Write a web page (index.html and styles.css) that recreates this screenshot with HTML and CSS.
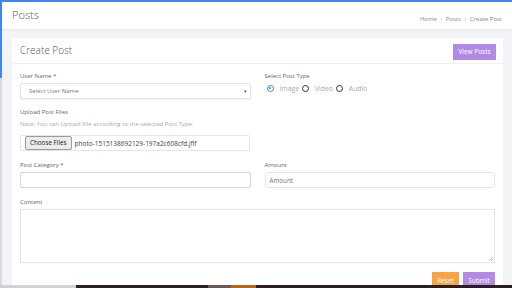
FILE: index.html
```html
<!DOCTYPE html>
<html lang="en">
<head>
  <meta charset="UTF-8" />
  <title>Posts - Create Post</title>
  <link rel="stylesheet" href="styles.css">
</head>
<body>

<div class="edge"></div>

<div class="page">
  <header class="topbar">
    <h1>Posts</h1>
    <div class="crumbs">Home <span class="sep">›</span> Posts <span class="sep">›</span> Create Post</div>
  </header>

  <main class="content">
    <div class="card">
      <div class="card-head">
        <h2>Create Post</h2>
        <a class="btn btn-purple" href="#">View Posts</a>
      </div>

      <form class="card-body">
        <div class="row">
          <div class="group">
            <label>User Name *</label>
            <div class="select">
              <span>Select User Name</span>
              <span class="caret">▾</span>
            </div>
          </div>
          <div class="group">
            <label>Select Post Type</label>
            <div class="radios">
              <span class="radio checked"></span><span class="opt">Image</span>
              <span class="radio"></span><span class="opt">Video</span>
              <span class="radio"></span><span class="opt">Audio</span>
            </div>
          </div>
        </div>

        <div class="row">
          <div class="group">
            <label>Upload Post Files</label>
            <p class="note">Note: You can Upload File according to the selected Post Type.</p>
            <div class="file">
              <span class="file-btn">Choose Files</span>
              <span class="file-name">photo-1515138692129-197a2c608cfd.jfif</span>
            </div>
          </div>
        </div>

        <div class="row">
          <div class="group">
            <label>Post Category *</label>
            <div class="input dark"></div>
          </div>
          <div class="group">
            <label>Amount</label>
            <div class="input"><span class="ph">Amount</span></div>
          </div>
        </div>

        <div class="group">
          <label>Content</label>
          <div class="textarea"><span class="grip"></span></div>
        </div>

        <div class="actions">
          <a class="btn btn-orange" href="#">Reset</a>
          <a class="btn btn-purple" href="#">Submit</a>
        </div>
      </form>
    </div>
  </main>
</div>

<div class="taskbar">
  <span class="tb-a"></span><span class="tb-b"></span><span class="tb-c"></span><span class="tb-d"></span><span class="tb-e"></span>
</div>

</body>
</html>
```

FILE: styles.css
```css
body {
  margin: 0;
  font-family: 'Open Sans', 'Liberation Sans', sans-serif;
  background-color: #f3f4f8;
  color: #555;
  display: flex;
  height: 288px;
  overflow: hidden;
  border-top: 2px solid #3f86f0;
  box-sizing: border-box;
}

.edge {
  width: 2px;
  flex: none;
  background: linear-gradient(#3f86f0 0, #3f86f0 76px, #d9dade 76px);
}

.page {
  flex: 1;
  min-width: 0;
}

.topbar {
  background-color: #fff;
  height: 27px;
  display: flex;
  align-items: center;
  justify-content: space-between;
  padding: 0 10px 0 10px;
  box-shadow: 0 1px 2px rgba(0, 0, 0, 0.06);
}

.topbar h1 {
  margin: 0;
  font-size: 11px;
  font-weight: 300;
  color: #555;
  margin-top: -2px;
}

.crumbs {
  font-size: 6px;
  color: #8a8a8a;
  margin-top: 6px;
}

.crumbs .sep {
  margin: 0 2px;
  color: #aaa;
}

.content {
  padding: 9px 9px 0 10px;
}

.card {
  background-color: #fff;
  height: 260px;
}

.card-head {
  height: 25px;
  border-bottom: 1px solid #eef0f3;
  display: flex;
  align-items: center;
  justify-content: space-between;
  padding: 0 7px 0 8px;
}

.card-head h2 {
  margin: 0;
  font-size: 10px;
  font-weight: 300;
  color: #555;
  margin-top: -2px;
}

.card-head .btn {
  margin-top: 3px;
}

.btn {
  display: inline-block;
  height: 16px;
  line-height: 16px;
  padding: 0 5px;
  font-size: 6.5px;
  color: #fff;
  text-decoration: none;
  box-sizing: border-box;
}

.btn-purple {
  background-color: #b08ae4;
}

.btn-orange {
  background-color: #f8a344;
}

.card-head .btn-purple {
  width: 43px;
  text-align: center;
  padding: 0;
}

.card-body {
  padding: 7px 8px 0 8px;
}

.row {
  display: grid;
  grid-template-columns: 1fr 1fr;
  column-gap: 14px;
}

.group {
  margin-bottom: 8px;
}

.group label {
  display: block;
  font-size: 6px;
  line-height: 10px;
  color: #666;
  margin-bottom: 2px;
}

.select, .input, .file {
  height: 16px;
  border: 1px solid #e4e5e8;
  border-radius: 2px;
  box-sizing: border-box;
  display: flex;
  align-items: center;
  font-size: 6px;
  color: #777;
}

.select {
  justify-content: space-between;
  padding: 0 3px 0 8px;
  box-shadow: 0 1px 1px rgba(0, 0, 0, 0.08);
}

.select .caret {
  font-size: 5px;
  color: #555;
}

.radios {
  display: flex;
  align-items: center;
  height: 10px;
  font-size: 6.8px;
  color: #aaa;
  padding-left: 2px;
}

.radio {
  width: 7px;
  height: 7px;
  border: 1.2px solid #333;
  border-radius: 50%;
  box-sizing: border-box;
  margin-right: 6px;
  position: relative;
}

.radio.checked {
  border-color: #3f86f0;
}

.radio.checked::after {
  content: "";
  position: absolute;
  left: 1px;
  top: 1px;
  width: 2.6px;
  height: 2.6px;
  border-radius: 50%;
  background-color: #3f86f0;
}

.opt {
  margin-right: 3px;
}

.note {
  margin: 0 0 6px;
  font-size: 6px;
  line-height: 10px;
  color: #aaa;
}

.file {
  width: 230px;
  padding-left: 4px;
  color: #444;
}

.file-btn {
  height: 12px;
  line-height: 12px;
  padding: 0 4px;
  background-color: #ececec;
  border: 1px solid #9a9a9a;
  border-radius: 2px;
  font-size: 6.3px;
  color: #222;
  margin-right: 3px;
}

.file-name {
  font-size: 6.5px;
}

.row-cat {
  margin-top: 1px;
}

.input.dark {
  border-color: #d5d6d9;
}

.input {
  padding-left: 4px;
  font-size: 6.3px;
}

.input .ph {
  color: #777;
}

.textarea {
  height: 54px;
  border: 1px solid #e4e5e8;
  box-sizing: border-box;
  position: relative;
}

.grip {
  position: absolute;
  right: 1px;
  bottom: 1px;
  width: 4px;
  height: 4px;
  background: linear-gradient(135deg, transparent 45%, #bbb 45%, #bbb 55%, transparent 55%, transparent 70%, #bbb 70%, #bbb 80%, transparent 80%);
}

.actions {
  display: flex;
  justify-content: flex-end;
  gap: 4px;
  margin-top: 9px;
}

.actions .btn {
  height: 17px;
  line-height: 17px;
  font-size: 6.5px;
}

.actions .btn-orange {
  width: 27px;
  text-align: center;
  padding: 0;
}

.actions .btn-purple {
  width: 32px;
  text-align: center;
  padding: 0;
}

.card-body > .row:nth-child(3) {
  margin-top: 1px;
}

.card-body > .group {
  margin-top: 1px;
  margin-bottom: 0;
}

.taskbar {
  position: fixed;
  left: 0;
  right: 0;
  bottom: 0;
  height: 3px;
  display: flex;
}

.tb-a { width: 76px; background-color: #d2d2d4; }
.tb-b { width: 132px; background-color: #2b1f1e; }
.tb-c { width: 23px; background-color: #6a5a55; }
.tb-d { width: 25px; background-color: #b8651c; }
.tb-e { flex: 1; background-color: #2a1f1f; }
```
